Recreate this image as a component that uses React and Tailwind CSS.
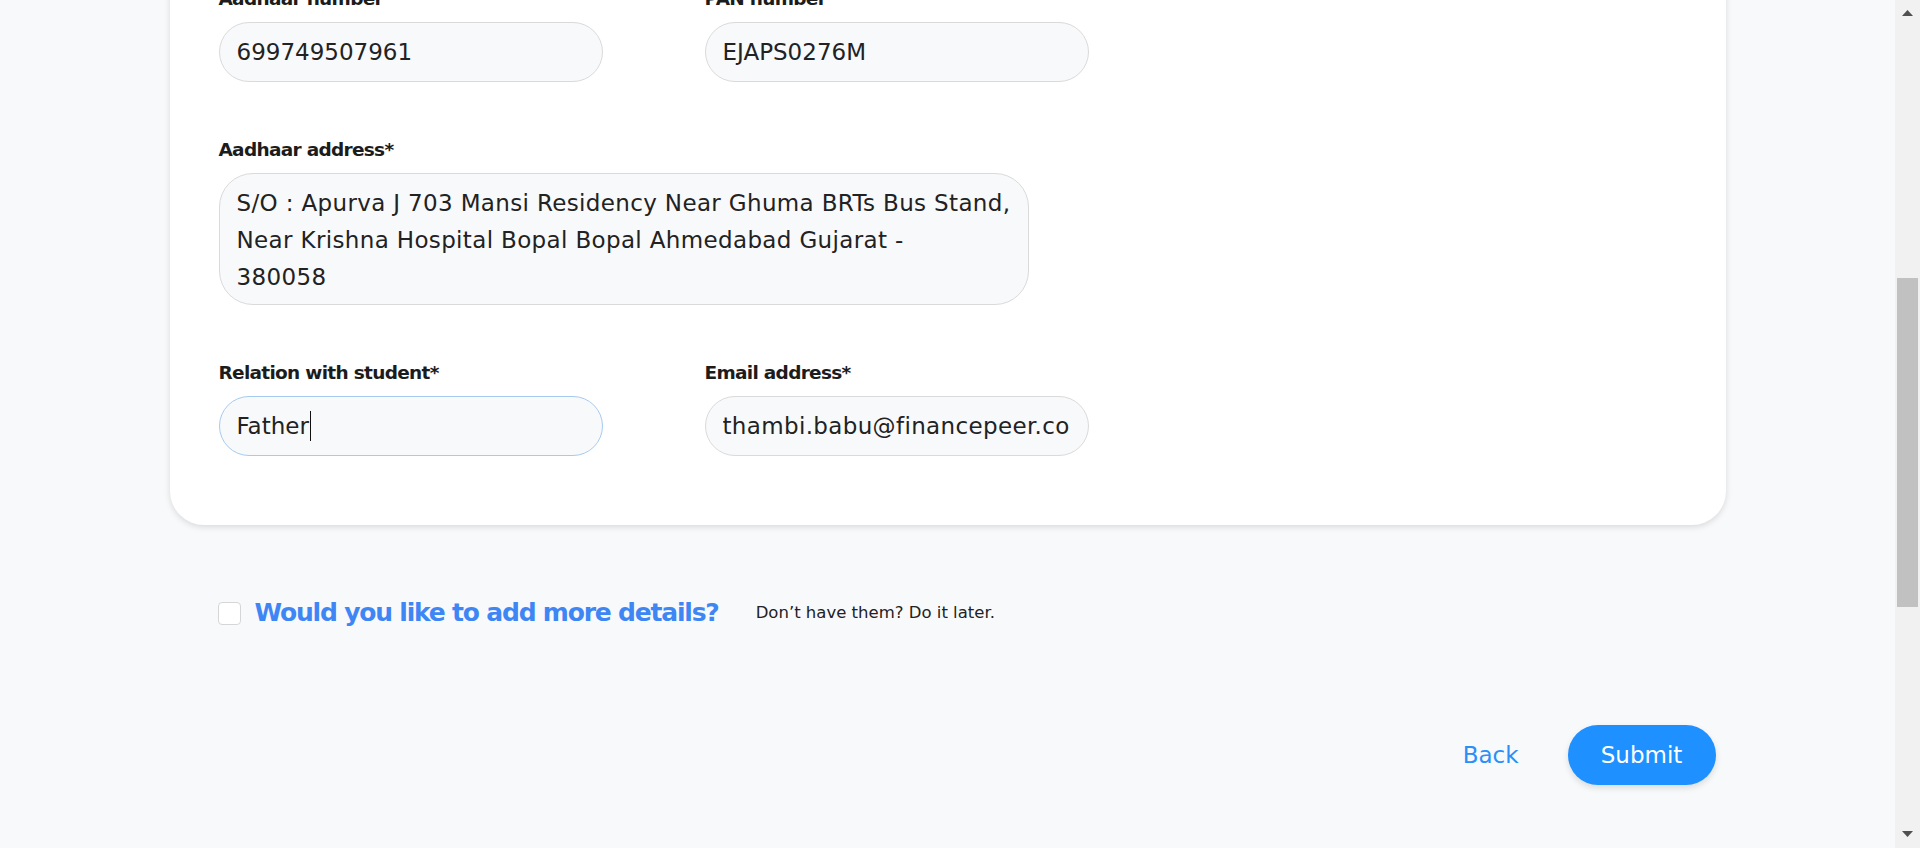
import React from 'react'

const FONT = "font-['DejaVu_Sans',sans-serif]"

function Label({ children }) {
  return (
    <div className="h-[24px] leading-[24px] mb-[11px] text-[18.5px] font-bold tracking-[-0.7px] text-[#1c1c1c] whitespace-nowrap">
      {children}
    </div>
  )
}

function Field({ label, value, focused, caret, wide }) {
  return (
    <div className="w-[384px]">
      <Label>{label}</Label>
      <div
        className={`h-[60px] rounded-full border bg-[#f8f9fb] px-[17px] flex items-center ${
          focused ? 'border-[#a6cbef]' : 'border-[#dadada]'
        }`}
      >
        <div
          className={`overflow-hidden whitespace-nowrap text-[23px] text-[#222] flex items-center ${
            wide ? 'tracking-[0.35px]' : ''
          }`}
        >
          <span>{value}</span>
          {caret && <span className="inline-block w-[1.5px] h-[30px] bg-[#111] ml-[1px]" />}
        </div>
      </div>
    </div>
  )
}

function Scrollbar() {
  return (
    <div className="w-[25px] h-[848px] bg-[#f1f1f1] flex flex-col shrink-0">
      <div className="h-[25px] flex items-start justify-center pt-[10px]">
        <svg width="11" height="6" viewBox="0 0 11 6"><path d="M0 6 L5.5 0 L11 6 Z" fill="#505050" /></svg>
      </div>
      <div className="flex-1">
        <div className="mt-[253px] mx-[2px] h-[329px] bg-[#c1c1c1]" />
      </div>
      <div className="h-[25px] flex items-start justify-center pt-[8px]">
        <svg width="11" height="6" viewBox="0 0 11 6"><path d="M0 0 L11 0 L5.5 6 Z" fill="#505050" /></svg>
      </div>
    </div>
  )
}

export default function App() {
  return (
    <div className={`flex h-[848px] overflow-hidden bg-[#f8f9fb] ${FONT}`}>
      <div className="flex-1 min-w-0">
        {/* form card */}
        <div className="mx-auto w-[1556px] -mt-[61px] rounded-[34px] bg-white shadow-[0_2px_6px_rgba(0,0,0,0.13)] px-[49px] pt-[48px] pb-[69px]">
          <div className="flex gap-[102px]">
            <Field label="Aadhaar number" value="699749507961" />
            <Field label="PAN number" value="EJAPS0276M" />
          </div>

          <div className="mt-[56px] w-[810px]">
            <Label>Aadhaar address*</Label>
            <div className="rounded-[34px] border border-[#dadada] bg-[#f8f9fb] px-[17px] pt-[11px] pb-[8px] text-[23px] leading-[37px] tracking-[0.35px] text-[#222]">
              <div className="whitespace-nowrap">S/O : Apurva J 703 Mansi Residency Near Ghuma BRTs Bus Stand,</div>
              <div className="whitespace-nowrap">Near Krishna Hospital Bopal Bopal Ahmedabad Gujarat -</div>
              <div className="whitespace-nowrap">380058</div>
            </div>
          </div>

          <div className="mt-[56px] flex gap-[102px]">
            <Field label="Relation with student*" value="Father" focused caret />
            <Field label="Email address*" value="thambi.babu@financepeer.com" wide />
          </div>
        </div>

        {/* more details */}
        <div className="mx-auto w-[1556px] mt-[72px] pl-[48px] h-[32px] flex items-center">
          <div className="w-[23px] h-[23px] rounded-[4px] border border-[#d6d6d6] bg-white shrink-0" />
          <div className="ml-[14px] text-[25px] leading-[32px] font-bold tracking-[-1.2px] text-[#3f86f5] whitespace-nowrap">
            Would you like to add more details?
          </div>
          <div className="ml-[37px] text-[16.5px] leading-[24px] text-[#222] whitespace-nowrap">
            Don’t have them? Do it later.
          </div>
        </div>

        {/* actions */}
        <div className="mx-auto w-[1556px] mt-[96px] pr-[10px] flex items-center justify-end gap-[49px]">
          <button className="text-[23px] text-[#2a8ff7]">Back</button>
          <button className="w-[148px] h-[60px] rounded-full bg-[#1e90ff] text-white text-[23px] shadow-[0_3px_6px_rgba(0,0,0,0.12)]">
            Submit
          </button>
        </div>
      </div>
      <Scrollbar />
    </div>
  )
}
